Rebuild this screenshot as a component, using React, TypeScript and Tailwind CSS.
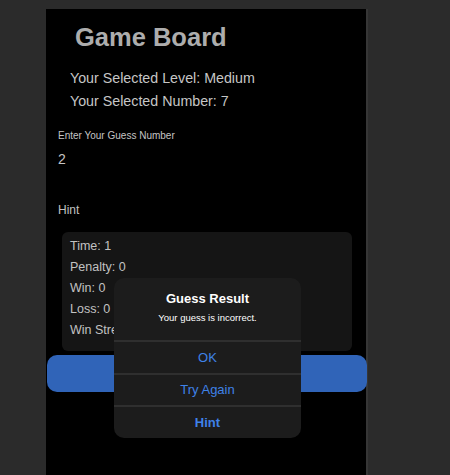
export default function App() {
  const stats = ['Time: 1', 'Penalty: 0', 'Win: 0', 'Loss: 0', 'Win Streak: 0'];

  return (
    <div className="relative min-h-[475px] w-full bg-[#2b2b2b] pt-[9px] font-['Liberation_Sans',Arial,sans-serif]">
      {/* Game board panel */}
      <div className="ml-[46px] flex min-h-[466px] w-[322px] flex-col border-r-2 border-[#363636] bg-black">
        <h1 className="pl-[29px] pt-[14px] text-[25.5px] font-bold leading-[29px] text-[#adadad]">
          Game Board
        </h1>

        <div className="mt-[15px] pl-[24px] text-[14.25px] leading-[23px] text-[#c6c6c6]">
          <p>Your Selected Level: Medium</p>
          <p>Your Selected Number: 7</p>
        </div>

        <label className="mt-[17px] pl-[12px] text-[10px] leading-[12px] text-[#c4c4c4]">
          Enter Your Guess Number
        </label>
        <div className="mt-[8.5px] pl-[12px] text-[14px] leading-[16px] text-[#c4c4c4]">2</div>

        <div className="mt-[36px] pl-[12px] text-[12px] leading-[14px] text-[#c0c0c0]">Hint</div>

        {/* Stats card */}
        <div className="ml-[16px] mt-[15px] w-[290px] rounded-[6px] bg-[#151515] pb-[10px] pl-[8px] pt-[4px]">
          {stats.map((s) => (
            <p key={s} className="text-[12.5px] leading-[21px] text-[#c2c2c2]">
              {s}
            </p>
          ))}
        </div>

        <button className="ml-px mt-[4px] h-[37px] w-[320px] rounded-[10px] bg-[#3064b8]" />
      </div>

      {/* Alert dialog */}
      <div className="absolute left-[114px] top-[278px] flex h-[160px] w-[187px] flex-col overflow-hidden rounded-[10px] bg-[#1c1c1c]">
        <div className="flex h-[62px] flex-col items-center pt-[13px]">
          <h2 className="text-[13px] font-bold leading-[15px] text-white">Guess Result</h2>
          <p className="mt-[6px] text-[9.5px] leading-[11px] text-white">Your guess is incorrect.</p>
        </div>
        <button className="flex flex-1 items-center justify-center border-t-2 border-[#2f2f2f] text-[13px] text-[#3f82e8]">
          OK
        </button>
        <button className="flex flex-1 items-center justify-center border-t-2 border-[#2f2f2f] text-[13px] text-[#3f82e8]">
          Try Again
        </button>
        <button className="flex flex-1 items-center justify-center border-t-2 border-[#2f2f2f] text-[13px] font-bold text-[#3f82e8]">
          Hint
        </button>
      </div>
    </div>
  );
}
